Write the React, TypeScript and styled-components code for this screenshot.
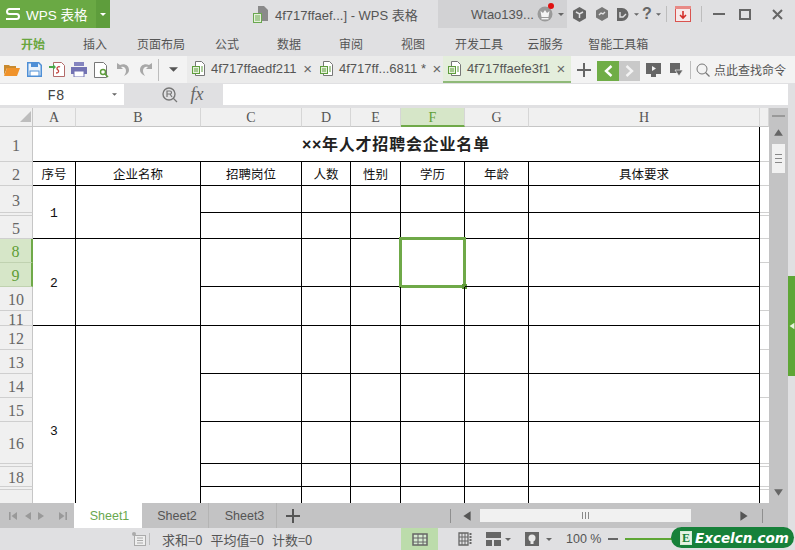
import React from 'react';
import styled, { createGlobalStyle } from 'styled-components';

const CJK = `"Noto Sans CJK SC", "Liberation Sans", sans-serif`;
const LATIN = `"Liberation Sans", "Noto Sans CJK SC", sans-serif`;
const SERIF = `"Liberation Serif", "Noto Sans CJK SC", serif`;
const GREEN = '#6fa948';
const CHROME = '#e0e0e2';
const BAR = '#c3c3c4';

const Global = createGlobalStyle`
  html, body { margin: 0; padding: 0; background: ${CHROME}; }
  * { box-sizing: border-box; }
  svg { flex: none; }
`;

const Page = styled.div`
  width: 795px; height: 550px; overflow: hidden; position: relative;
  display: flex; flex-direction: column; background: ${CHROME};
  font-family: ${CJK}; color: #555;
`;
const Slot = styled.span<{ $w: number; $ml?: number }>`
  flex: none; width: ${p => p.$w}px; margin-left: ${p => p.$ml ?? 0}px;
  display: flex; align-items: center; justify-content: center; position: relative;
`;
const Sep = styled.span<{ $h: number; $c?: string }>`
  width: 1px; height: ${p => p.$h}px; background: ${p => p.$c ?? '#bdbdbd'};
`;

/* title bar */
const TitleBar = styled.div`height: 28px; display: flex; align-items: stretch; flex: none;`;
const BrandMain = styled.div`
  width: 96px; background: #6aa944; color: #fff; display: flex; align-items: center;
  padding-left: 5px; gap: 5px; font: 13.5px ${LATIN};
`;
const BrandDrop = styled.div`width: 14px; background: #5e9d3c; display: flex; align-items: center; justify-content: center;`;
const DocTitle = styled.div`
  width: 328px; padding-left: 143px; display: flex; align-items: center; gap: 7px;
  font: 13px ${LATIN}; color: #555; white-space: nowrap;
`;
const UserZone = styled.div`
  width: 129px; background: #d2d2d4; padding-left: 33px; display: flex; align-items: center;
  font: 13px ${LATIN}; color: #555; white-space: nowrap;
`;
const RedDot = styled.span`
  position: absolute; top: -3px; right: -1px; width: 6px; height: 6px; border-radius: 50%; background: #e01010;
`;
const Help = styled.span`font: 700 16px/16px ${LATIN}; color: #666;`;

/* menu */
const MenuBar = styled.div`height: 28px; flex: none; display: flex; align-items: center; padding: 4px 0 0 2px;`;
const MenuItem = styled.span<{ $pad: number; $active?: boolean }>`
  padding: 0 ${p => p.$pad}px; font-size: 12px; line-height: 16px; white-space: nowrap;
  font-weight: ${p => (p.$active ? 700 : 400)};
  color: ${p => (p.$active ? '#69a63f' : '#555')};
`;

/* tool bar with document tabs */
const ToolBar = styled.div`height: 27px; flex: none; display: flex; background: #f3f3f3;`;
const QuickTools = styled.div`width: 187px; padding-left: 1px; display: flex; align-items: center;`;
const DocTab = styled.div<{ $active?: boolean }>`
  width: 128px; flex: none; display: flex; align-items: center; padding: 0 6px 0 5px; gap: 6px;
  background: ${p => (p.$active ? '#e4eedc' : '#ebebeb')};
  border-bottom: 2px solid ${p => (p.$active ? '#8fb978' : '#ebebeb')};
  font: 13px ${LATIN}; color: #555; white-space: nowrap;
`;
const Close = styled.span`
  margin-left: auto; font: 15px ${LATIN}; color: #666; width: 10px; flex: none; text-align: center;
`;
const NavBtn = styled.span<{ $on?: boolean }>`
  flex: none; width: ${p => (p.$on ? 22 : 21)}px; height: 20px; margin-top: 3px;
  background: ${p => (p.$on ? '#70ad47' : '#c9c9c9')};
  display: flex; align-items: center; justify-content: center;
`;
const ToolRow = styled.div`display: flex; align-items: center;`;
const SearchText = styled.span`margin-left: 2px; font-size: 12px; color: #555; white-space: nowrap;`;

/* formula bar */
const FormulaBar = styled.div`height: 25px; flex: none; display: flex; padding: 1px 7px 3px 0;`;
const NameBox = styled.div`
  width: 124px; background: #fff; display: flex; align-items: center; position: relative;
  font: 14px "Liberation Mono", monospace; color: #444;
`;
const NameText = styled.span`width: 112px; padding-top: 3px; text-align: center;`;
const Fx = styled.span`font: italic 18px ${SERIF}; color: #666;`;
const FormulaInput = styled.div`flex: 1; background: #fff;`;

/* work area */
const Work = styled.div`flex: 1; min-height: 0; display: flex;`;
const SheetColumn = styled.div`width: 769px; display: flex; flex-direction: column;`;
const SheetView = styled.div`height: 395px; overflow: hidden; background: #fff;`;
const Table = styled.table`
  table-layout: fixed; width: 769px; border-collapse: separate; border-spacing: 0;
`;
const Col = styled.col<{ $w: number }>`width: ${p => p.$w}px;`;
const Row = styled.tr<{ $h: number }>`height: ${p => p.$h}px;`;
const ColHead = styled.th<{ $sel?: boolean }>`
  padding: 2px 0 0; height: 19px; font: 400 14px/14px ${SERIF};
  color: ${p => (p.$sel ? '#5f9e36' : '#555')};
  background: ${p => (p.$sel ? '#d6e6c8' : '#f0f0f0')};
  border-right: 1px solid #d6d6d6;
  border-bottom: ${p => (p.$sel ? `2px solid ${GREEN}` : '1px solid #c6c6c6')};
`;
const Corner = styled.th`
  padding: 0 1px 1px 0; background: #f0f0f0; border-right: 1px solid #c6c6c6; border-bottom: 1px solid #c6c6c6; text-align: right; line-height: 0;
`;
const RowHead = styled.th<{ $sel?: boolean }>`
  padding: 0; font: 400 16px/10px ${SERIF};
  color: ${p => (p.$sel ? '#5f9e36' : '#666')};
  background: ${p => (p.$sel ? '#d6e6c8' : '#f0f0f0')};
  border-right: ${p => (p.$sel ? `2px solid ${GREEN}` : '1px solid #c6c6c6')};
  border-bottom: 1px solid ${p => (p.$sel ? '#c0d2b0' : '#cfcfcf')};
  &:not(:empty) { padding-top: 3px; }
`;
const Cell = styled.td`
  padding: 0; border-right: 1px solid #000; border-bottom: 1px solid #000;
  font: 12.5px/14px ${CJK}; color: #111; text-align: center; position: relative;
`;
const NumCell = styled(Cell)`padding-top: 3px; font: 13px/14px "Liberation Mono", monospace;`;
const TitleCell = styled.td`
  padding: 0; border-bottom: 1px solid #000; border-right: 1px solid #000;
  font: 700 16px/20px ${CJK}; color: #222; text-align: center; letter-spacing: 0.8px;
`;
const TitleMark = styled.span`font-family: ${LATIN}; letter-spacing: 0.6px;`;
const Margin = styled.td`padding: 0; border-bottom: 1px solid #d0d0d0;`;
const Selection = styled.div`
  position: absolute; inset: -2px -2px -2px -2px; border: 3px solid ${GREEN};
`;
const Handle = styled.span`
  position: absolute; right: -4px; bottom: -4px; width: 5px; height: 5px; background: #5f9a38;
`;

/* sheet tabs */
const TabBar = styled.div`height: 25px; flex: none; display: flex; align-items: center; background: ${BAR};`;
const SheetNav = styled.div`width: 74px; flex: none; display: flex; padding-left: 6px;`;
const SheetTab = styled.div<{ $active?: boolean; $w: number }>`
  width: ${p => p.$w}px; height: 25px; flex: none; display: flex; align-items: center; justify-content: center;
  padding-left: 4px; font: 12.5px ${LATIN}; color: ${p => (p.$active ? '#6aa84f' : '#555')};
  background: ${p => (p.$active ? '#fff' : 'transparent')};
  border-right: 1px solid ${p => (p.$active ? '#fff' : '#b4b4b4')};
`;
const ScrollThumbH = styled.div`
  width: 211px; height: 13px; flex: none; background: #f1f1f1; display: flex; align-items: center; justify-content: center; gap: 2px;
`;
const GripV = styled.span`width: 1px; height: 7px; background: #888;`;
const Gap = styled.span<{ $w: number }>`width: ${p => p.$w}px; flex: none;`;

/* vertical scrollbar */
const VScroll = styled.div`width: 19px; flex: none; background: ${BAR}; display: flex; flex-direction: column; align-items: center;`;
const Dash = styled.span`width: 13px; height: 2px; background: #999; margin-top: 7px;`;
const ArrowWrap = styled.span<{ $mt: number }>`margin-top: ${p => p.$mt}px; line-height: 0;`;
const ThumbV = styled.div`
  width: 13px; height: 29px; margin-top: 6px; background: #f1f1f1;
  display: flex; flex-direction: column; align-items: center; justify-content: center; gap: 3px;
`;
const GripH = styled.span`width: 7px; height: 1px; background: #888;`;
const Strip = styled.div`width: 7px; flex: none; display: flex; flex-direction: column; padding-top: 168px;`;
const StripTab = styled.div`height: 100px; background: #5ea636; display: flex; align-items: center; justify-content: center;`;

/* status bar */
const StatusBar = styled.div`height: 22px; flex: none; display: flex; align-items: center; padding-left: 131px; background: ${CHROME};`;
const Stats = styled.div`width: 239px; margin-left: 11px; display: flex; gap: 8px; font-size: 13px; color: #555; white-space: nowrap;`;
const ViewBtn = styled.div`width: 37px; height: 22px; flex: none; background: #bcdcab; display: flex; align-items: center; justify-content: center;`;
const Zoom = styled.span`margin-left: 12px; font: 12.5px ${LATIN}; color: #555; white-space: nowrap;`;
const Minus = styled.span`width: 10px; height: 2px; margin-left: 7px; background: #666;`;
const Track = styled.span`width: 60px; height: 2px; margin-left: 7px; background: #5ea636;`;
const Pill = styled.div`
  position: absolute; left: 671px; top: 527px; width: 123px; height: 21px; border-radius: 11px;
  background: #17813a; display: flex; align-items: center; padding-left: 9px; gap: 3px;
`;
const PillE = styled.span`
  width: 12px; height: 14px; border: 1px solid #d8ecd8; background: #e6f3e2; color: #17813a;
  font: 700 12px/12px ${SERIF}; text-align: center;
`;
const PillText = styled.span`font: italic 700 13.5px "DejaVu Sans", sans-serif; color: #fff; white-space: nowrap;`;

/* icons */
const Caret = ({ w = 7, c = '#666' }: { w?: number; c?: string }) => (
  <svg width={w} height={Math.ceil(w / 2)} viewBox="0 0 8 4"><path d="M0 0h8L4 4z" fill={c} /></svg>
);
const Tri = ({ d, c = '#777', s = 10 }: { d: 'l' | 'r' | 'u' | 'd'; c?: string; s?: number }) => {
  const p = { l: 'M8 1v8L2 5z', r: 'M2 1v8l6-4z', u: 'M1 8h8L5 2z', d: 'M1 2h8L5 8z' }[d];
  return <svg width={s} height={s} viewBox="0 0 10 10"><path d={p} fill={c} /></svg>;
};
const LogoS = () => (
  <svg width="16" height="14" viewBox="0 0 16 14"><path d="M15 2H4.500a2.500 2.500 0 0 0 0 5h7a2.500 2.500 0 0 1 0 5H1" fill="none" stroke="#fff" strokeWidth="2" /></svg>
);
const TitleDoc = () => (
  <svg width="15" height="17" viewBox="0 0 15 17">
    <path d="M5 0h6l4 4v11H5z" fill="#8a8a8a" />
    <rect x="0.5" y="7.5" width="8" height="9" fill="#e6f1dc" stroke="#6aa84f" />
    <path d="M2 10h5M2 12h5M2 14h5" stroke="#6aa84f" />
  </svg>
);
const TabDoc = () => (
  <svg width="13" height="15" viewBox="0 0 13 15">
    <path d="M3.5.5h6l3 3v11h-9z" fill="#fff" stroke="#777" />
    <rect x="0.5" y="5.5" width="7" height="7" fill="#e6f1dc" stroke="#5e9d3c" />
    <path d="M2 8h4M2 10h4M9 6h2M9 8h2M9 10h2" stroke="#5e9d3c" />
  </svg>
);
const Hex = ({ c = '#666' }: { c?: string }) => (
  <svg width="15" height="15" viewBox="0 0 15 15"><path d="M7.5 0l6.5 3.7v7.6L7.5 15 1 11.3V3.7z" fill={c} /><path d="M4 5l3.5 2 3.5-2M7.5 7v4" stroke="#e0e0e2" strokeWidth="1.5" fill="none" /></svg>
);
const Hex2 = () => (
  <svg width="14" height="14" viewBox="0 0 14 14"><path d="M7 0l6 3.500v7L7 14l-6-3.500v-7z" fill="#777" /><path d="M4 8l2-2 2 1 2-2" stroke="#e0e0e2" strokeWidth="1.4" fill="none" /></svg>
);
const DIcon = () => (
  <svg width="14" height="15" viewBox="0 0 14 15"><path d="M1 1h5a6.500 6.500 0 0 1 0 13H1z" fill="#666" /><path d="M4 5v5h3l3-3" stroke="#e0e0e2" strokeWidth="1.4" fill="none" /></svg>
);
const Crown = () => (
  <svg width="16" height="16" viewBox="0 0 16 16"><circle cx="8" cy="8" r="7.5" fill="#9a9a9a" /><path d="M3.5 5l2.5 2L8 4l2 3 2.500-2-1 6h-7z" fill="#f4f4f4" /><rect x="4.500" y="12" width="7" height="1.4" fill="#f4f4f4" /></svg>
);
const MailBox = () => (
  <svg width="16" height="16" viewBox="0 0 16 16"><rect x="0.5" y="1.5" width="15" height="14" fill="#f7e9e9" stroke="#d9534f" /><rect x="0" y="0" width="16" height="3" fill="#e88a86" /><path d="M8 5v7M5 9l3 3 3-3" stroke="#d42f2a" strokeWidth="1.6" fill="none" /></svg>
);
const Folder = () => (
  <svg width="16" height="13" viewBox="0 0 16 13"><path d="M0 2h5l1 1h6v2H3L0 12z" fill="#c98a2e" /><path d="M3 5h13l-3 8H0z" fill="#f0932b" /></svg>
);
const Save = () => (
  <svg width="15" height="15" viewBox="0 0 15 15"><path d="M.75.75h11l2.500 2.500v11H.75z" fill="#eaf2fb" stroke="#4f8fd6" strokeWidth="1.5" /><rect x="4" y="1" width="7" height="4" fill="#4f8fd6" /><rect x="3" y="9" width="9" height="5" fill="#fff" stroke="#4f8fd6" /></svg>
);
const Export = () => (
  <svg width="16" height="15" viewBox="0 0 16 15"><path d="M4.500.5h8l3 3v11h-11z" fill="#fff" stroke="#b36a6a" /><path d="M11 5a2 2 0 0 0-3 2l1 1c1 1 1 3-2 3" fill="none" stroke="#c2413c" strokeWidth="1.3" /><path d="M0 4h4V2l3 3-3 3V6H0z" fill="#4aa84a" /></svg>
);
const Printer = () => (
  <svg width="16" height="15" viewBox="0 0 16 15"><rect x="3" y="0" width="10" height="4" fill="#8484bf" /><rect x="0" y="5" width="16" height="7" fill="#7373b3" /><rect x="3" y="9" width="10" height="6" fill="#fff" stroke="#7373b3" /></svg>
);
const Preview = () => (
  <svg width="15" height="16" viewBox="0 0 15 16"><path d="M.5.5h9l3 3v12H.5z" fill="#fff" stroke="#777" /><circle cx="9" cy="10" r="2.500" fill="none" stroke="#5e9d3c" strokeWidth="1.4" /><path d="M11 12l3 3" stroke="#5e9d3c" strokeWidth="1.6" /></svg>
);
const Undo = ({ flip }: { flip?: boolean }) => (
  <svg width="14" height="13" viewBox="0 0 14 13">
    <g transform={flip ? 'translate(14 0) scale(-1 1)' : undefined}>
      <path d="M1 0v6h6L5 4c3-1 5 1 5 4 0 2-1 3-2 5 4-2 5-4 5-6 0-5-5-7-9-5z" fill="#a8a8a8" />
    </g>
  </svg>
);
const Monitor = () => (
  <svg width="15" height="14" viewBox="0 0 15 14"><rect x="0" y="0" width="15" height="11" fill="#666" /><rect x="5" y="11" width="5" height="3" fill="#666" /><path d="M6 3v5l4-2.500z" fill="#f3f3f3" /></svg>
);
const Flag = () => (
  <svg width="13" height="13" viewBox="0 0 13 13"><rect x="0" y="0" width="10" height="10" fill="#666" /><path d="M5 7h8l-4 6z" fill="#666" stroke="#f3f3f3" strokeWidth="0.7" /></svg>
);
const Search = () => (
  <svg width="14" height="14" viewBox="0 0 14 14"><circle cx="6" cy="6" r="5" fill="none" stroke="#777" /><path d="M9.500 9.500l4 4" stroke="#777" strokeWidth="1.2" /></svg>
);
const FuncSearch = () => (
  <svg width="16" height="16" viewBox="0 0 16 16"><circle cx="7" cy="7" r="6" fill="none" stroke="#777" strokeWidth="1.4" /><path d="M5 10V4h3a1.500 1.500 0 0 1 0 3H5m3 0l2 3M11 11l4 4" fill="none" stroke="#777" strokeWidth="1.2" /></svg>
);
const CornerTri = () => (
  <svg width="11" height="11" viewBox="0 0 11 11"><path d="M11 0v11H0z" fill="#bdbdbd" /></svg>
);
const Skip = ({ flip }: { flip?: boolean }) => (
  <svg width="10" height="10" viewBox="0 0 10 10">
    <g transform={flip ? 'translate(10 0) scale(-1 1)' : undefined}><rect x="1" y="1" width="1.6" height="8" fill="#999" /><path d="M9 1v8L3.500 5z" fill="#999" /></g>
  </svg>
);
const Chevron = ({ d, c }: { d: 'l' | 'r'; c: string }) => (
  <svg width="9" height="12" viewBox="0 0 9 12"><path d={d === 'l' ? 'M7.500 1L2 6l5.500 5' : 'M1.500 1L7 6l-5.500 5'} fill="none" stroke={c} strokeWidth="2.4" /></svg>
);
const Plus = ({ s = 14, c = '#666' }: { s?: number; c?: string }) => (
  <svg width={s} height={s} viewBox="0 0 14 14"><path d="M7 0v14M0 7h14" stroke={c} strokeWidth="2" /></svg>
);
const StatusNote = () => (
  <svg width="14" height="14" viewBox="0 0 14 14"><circle cx="2" cy="2" r="2" fill="#aaa" /><rect x="2.500" y="3.500" width="11" height="10" fill="#eee" stroke="#aaa" /><path d="M5 6h6M5 8.500h6M5 11h6" stroke="#aaa" /></svg>
);
const NormalGrid = () => (
  <svg width="16" height="13" viewBox="0 0 16 13"><rect x="1" y="1" width="14" height="11" fill="#d5ead0" stroke="#666" strokeWidth="1.5" /><path d="M6 1v11M11 1v11M1 5h14M1 9h14" stroke="#666" /></svg>
);
const PageGrid = () => (
  <svg width="15" height="14" viewBox="0 0 15 14"><path d="M1 1h9v12H1z" fill="none" stroke="#666" strokeWidth="1.3" /><path d="M4 1v12M7 1v12M1 5h9M1 9h9" stroke="#666" /><path d="M12.500 1v12" stroke="#666" strokeWidth="2" strokeDasharray="2 1" /></svg>
);
const Freeze = () => (
  <svg width="15" height="14" viewBox="0 0 15 14"><rect width="15" height="14" fill="#666" /><path d="M7 6v8M0 7h15" stroke="#e0e0e2" strokeWidth="2" /></svg>
);
const Bulb = () => (
  <svg width="14" height="14" viewBox="0 0 14 14"><rect width="14" height="14" fill="#666" /><circle cx="7" cy="6" r="3.500" fill="#e8e8e8" /><rect x="5.500" y="9" width="3" height="3" fill="#e8e8e8" /></svg>
);

/* data */
const LETTERS = ['A', 'B', 'C', 'D', 'E', 'F', 'G', 'H'];
const WIDTHS = [33, 43, 125, 101, 49, 50, 64, 64, 231, 9];
type RowDef = {
  label: string; h: number; sel?: boolean;
  lead?: { text: string; span: number };
  span?: number;
  selectF?: boolean;
};
const ROWS: RowDef[] = [
  { label: '3', h: 27, lead: { text: '1', span: 3 }, span: 1 },
  { label: '', h: 3, span: 2 },
  { label: '5', h: 23 },
  { label: '8', h: 24, sel: true, lead: { text: '2', span: 4 }, span: 2, selectF: true },
  { label: '9', h: 24, sel: true },
  { label: '10', h: 24, span: 2 },
  { label: '11', h: 15 },
  { label: '12', h: 24, lead: { text: '3', span: 9 }, span: 2 },
  { label: '13', h: 24 },
  { label: '14', h: 24, span: 2 },
  { label: '15', h: 24 },
  { label: '16', h: 42, span: 1 },
  { label: '', h: 3, span: 2 },
  { label: '18', h: 20 },
  { label: '', h: 3, span: 2 },
  { label: '', h: 45 },
];
const HEADS = ['序号', '企业名称', '招聘岗位', '人数', '性别', '学历', '年龄', '具体要求'];
const MENU: [string, number][] = [
  ['开始', 19], ['插入', 19], ['页面布局', 11], ['公式', 19], ['数据', 19], ['审阅', 19],
  ['视图', 19], ['开发工具', 11], ['云服务', 13], ['智能工具箱', 12],
];

export default function App() {
  return (
    <Page>
      <Global />
      <TitleBar>
        <BrandMain><LogoS /><span>WPS 表格</span></BrandMain>
        <BrandDrop><Caret w={6} c="#fff" /></BrandDrop>
        <DocTitle><TitleDoc /><span>4f717ffaef...] - WPS 表格</span></DocTitle>
        <UserZone>
          <span>Wtao139...</span>
          <Slot $w={16} $ml={3}><Crown /><RedDot /></Slot>
          <Slot $w={12} $ml={2}><Caret w={6} /></Slot>
        </UserZone>
        <ToolRow>
          <Slot $w={24}><Hex /></Slot>
          <Slot $w={22}><Hex2 /></Slot>
          <Slot $w={20}><DIcon /></Slot>
          <Slot $w={7}><Caret w={5} /></Slot>
          <Slot $w={14}><Help>?</Help></Slot>
          <Slot $w={8}><Caret w={5} /></Slot>
          <Slot $w={8}><Sep $h={16} /></Slot>
          <Slot $w={26}><MailBox /></Slot>
          <Slot $w={10}><Sep $h={16} /></Slot>
          <Slot $w={25}><svg width="12" height="2"><rect width="12" height="2" fill="#666" /></svg></Slot>
          <Slot $w={28}><svg width="12" height="11"><rect x="1" y="1" width="10" height="9" fill="none" stroke="#666" strokeWidth="2" /></svg></Slot>
          <Slot $w={36}><svg width="11" height="11"><path d="M1 1l9 9M10 1l-9 9" stroke="#666" strokeWidth="2" /></svg></Slot>
        </ToolRow>
      </TitleBar>

      <MenuBar>
        {MENU.map(([t, pad], i) => <MenuItem key={t} $pad={pad} $active={i === 0}>{t}</MenuItem>)}
      </MenuBar>

      <ToolBar>
        <QuickTools>
          <Slot $w={22}><Folder /></Slot>
          <Slot $w={23}><Save /></Slot>
          <Slot $w={22}><Export /></Slot>
          <Slot $w={22}><Printer /></Slot>
          <Slot $w={22}><Preview /></Slot>
          <Slot $w={22}><Undo /></Slot>
          <Slot $w={24}><Undo flip /></Slot>
          <Sep $h={22} />
          <Slot $w={28}><Caret w={9} c="#555" /></Slot>
        </QuickTools>
        <DocTab><TabDoc /><span>4f717ffaedf211</span><Close>×</Close></DocTab>
        <DocTab><TabDoc /><span>4f717ff...6811 *</span><Close>×</Close></DocTab>
        <DocTab $active><TabDoc /><span>4f717ffaefe3f1</span><Close>×</Close></DocTab>
        <ToolRow>
          <Slot $w={26}><Plus /></Slot>
          <NavBtn $on><Chevron d="l" c="#fff" /></NavBtn>
          <NavBtn><Chevron d="r" c="#f3f3f3" /></NavBtn>
          <Slot $w={26}><Monitor /></Slot>
          <Slot $w={20}><Flag /></Slot>
          <Slot $w={8}><Sep $h={18} /></Slot>
          <Slot $w={18}><Search /></Slot>
          <SearchText>点此查找命令</SearchText>
        </ToolRow>
      </ToolBar>

      <FormulaBar>
        <NameBox><NameText>F8</NameText><Caret w={5} /></NameBox>
        <Slot $w={16} $ml={38}><FuncSearch /></Slot>
        <Slot $w={20} $ml={9}><Fx>fx</Fx></Slot>
        <Gap $w={16} />
        <FormulaInput />
      </FormulaBar>

      <Work>
        <SheetColumn>
          <SheetView>
            <Table>
              <colgroup>{WIDTHS.map((w, i) => <Col key={i} $w={w} />)}</colgroup>
              <thead>
                <tr>
                  <Corner><CornerTri /></Corner>
                  {LETTERS.map(l => <ColHead key={l} $sel={l === 'F'}>{l}</ColHead>)}
                  <ColHead />
                </tr>
              </thead>
              <tbody>
                <Row $h={35}>
                  <RowHead>1</RowHead>
                  <TitleCell colSpan={8}><TitleMark>××</TitleMark>年人才招聘会企业名单</TitleCell>
                  <Margin />
                </Row>
                <Row $h={24}>
                  <RowHead>2</RowHead>
                  {HEADS.map(h => <Cell key={h}>{h}</Cell>)}
                  <Margin />
                </Row>
                {ROWS.map((r, i) => (
                  <Row key={i} $h={r.h}>
                    <RowHead $sel={r.sel}>{r.label}</RowHead>
                    {r.lead && <NumCell rowSpan={r.lead.span}>{r.lead.text}</NumCell>}
                    {r.lead && <Cell rowSpan={r.lead.span} />}
                    {r.span && LETTERS.slice(2).map(l => (
                      <Cell key={l} rowSpan={r.span}>
                        {r.selectF && l === 'F' && <Selection><Handle /></Selection>}
                      </Cell>
                    ))}
                    <Margin />
                  </Row>
                ))}
              </tbody>
            </Table>
          </SheetView>
          <TabBar>
            <SheetNav>
              <Slot $w={14}><Skip /></Slot>
              <Slot $w={15}><Tri d="l" c="#999" /></Slot>
              <Slot $w={12}><Tri d="r" c="#999" /></Slot>
              <Slot $w={20} $ml={6}><Skip flip /></Slot>
            </SheetNav>
            <SheetTab $w={68} $active>Sheet1</SheetTab>
            <SheetTab $w={67}>Sheet2</SheetTab>
            <SheetTab $w={68}>Sheet3</SheetTab>
            <Slot $w={32}><Plus c="#555" /></Slot>
            <Gap $w={138} />
            <Slot $w={6}><Sep $h={14} $c="#8f8f8f" /></Slot>
            <Slot $w={27}><Tri d="l" c="#555" s={12} /></Slot>
            <ScrollThumbH><GripV /><GripV /><GripV /></ScrollThumbH>
            <Gap $w={47} />
            <Slot $w={12}><Tri d="r" c="#555" s={12} /></Slot>
            <Gap $w={9} />
            <Slot $w={6}><Sep $h={14} $c="#8f8f8f" /></Slot>
          </TabBar>
        </SheetColumn>
        <VScroll>
          <Dash />
          <ArrowWrap $mt={10}><Tri d="u" c="#666" s={11} /></ArrowWrap>
          <ThumbV><GripH /><GripH /><GripH /></ThumbV>
          <ArrowWrap $mt={314}><Tri d="d" c="#666" s={11} /></ArrowWrap>
        </VScroll>
        <Strip>
          <StripTab><Tri d="l" c="#e8f3dd" s={8} /></StripTab>
        </Strip>
      </Work>

      <StatusBar>
        <Slot $w={16}><StatusNote /></Slot>
        <Slot $w={4}><Sep $h={12} /></Slot>
        <Stats><span>求和=0</span><span>平均值=0</span><span>计数=0</span></Stats>
        <ViewBtn><NormalGrid /></ViewBtn>
        <Slot $w={38} $ml={8}><PageGrid /></Slot>
        <Slot $w={18}><Freeze /></Slot>
        <Slot $w={12}><Caret w={6} /></Slot>
        <Slot $w={24} $ml={6}><Bulb /></Slot>
        <Slot $w={10}><Caret w={6} /></Slot>
        <Zoom>100 %</Zoom>
        <Minus />
        <Track />
      </StatusBar>
      <Pill><PillE>E</PillE><PillText>Excelcn.com</PillText></Pill>
    </Page>
  );
}
